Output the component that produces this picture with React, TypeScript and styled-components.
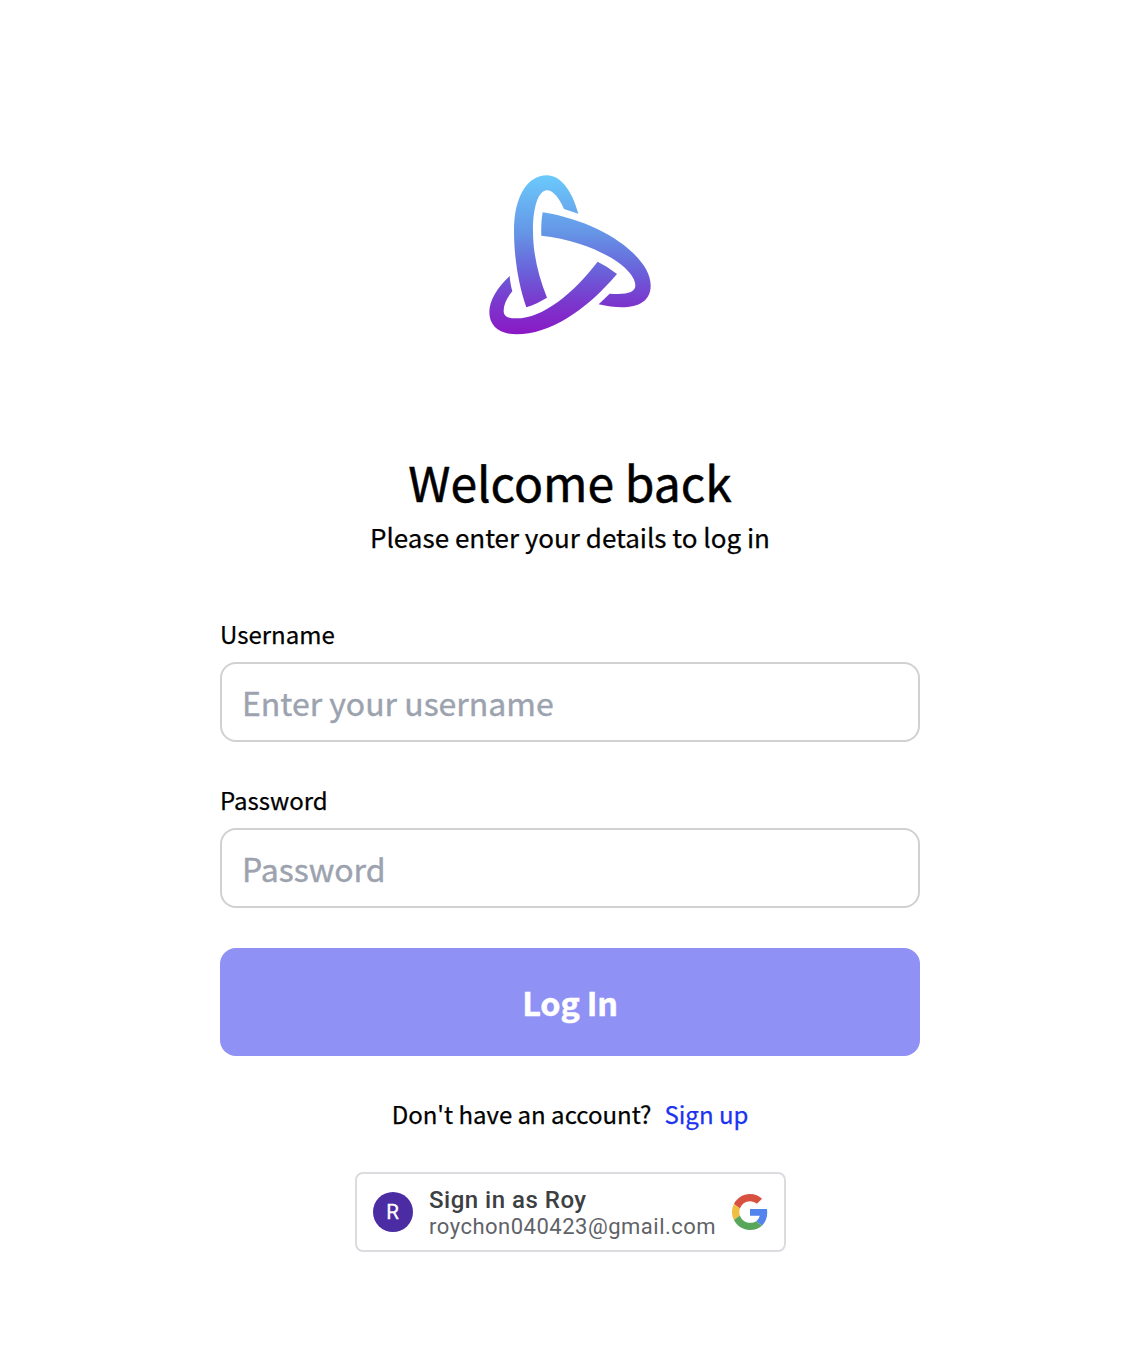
import React from "react";
import styled, { createGlobalStyle } from "styled-components";

const GlobalStyle = createGlobalStyle`
  *, *::before, *::after { box-sizing: border-box; }
  body {
    margin: 0;
    background: #fff;
    color: #000;
    font-family: "Noto Sans CJK KR", "Noto Sans", sans-serif;
  }
`;

const Page = styled.main`
  display: flex;
  flex-direction: column;
  align-items: center;
  min-height: 1366px;
  padding: 165px 0 0 2px;
`;

const Logo = styled.svg`
  display: block;
  width: 180px;
  height: 180px;
`;

const Header = styled.header`
  display: flex;
  flex-direction: column;
  align-items: center;
  gap: 7px;
  margin-top: 106px;
`;

const Title = styled.h1`
  margin: 0;
  font-size: 48px;
  font-weight: 400;
  line-height: 60px;
  -webkit-text-stroke: 0.5px currentColor;
`;

const Subtitle = styled.p`
  margin: 0;
  font-size: 26px;
  line-height: 38px;
  -webkit-text-stroke: 0.25px currentColor;
`;

const Form = styled.form`
  display: flex;
  flex-direction: column;
  gap: 40px;
  width: 700px;
  margin-top: 60px;
`;

const Field = styled.div`
  display: flex;
  flex-direction: column;
  gap: 10px;
`;

const Label = styled.label`
  font-size: 24px;
  line-height: 36px;
  -webkit-text-stroke: 0.25px currentColor;
`;

const Input = styled.input`
  width: 100%;
  height: 80px;
  padding: 0 20px;
  border: 2px solid #d1d1d3;
  border-radius: 16px;
  background: #fff;
  font-family: inherit;
  font-size: 32px;
  outline: none;

  &::placeholder {
    color: #9ca3af;
    opacity: 1;
    -webkit-text-stroke: 0.4px #9ca3af;
  }
`;

const SubmitButton = styled.button`
  height: 108px;
  padding: 0 0 2px;
  border: 0;
  border-radius: 16px;
  background: #8f91f4;
  color: #fff;
  font-family: inherit;
  font-size: 32.4px;
  font-weight: 700;
  letter-spacing: -0.2px;
  -webkit-text-stroke: 0.5px currentColor;
`;

const SignUpRow = styled.p`
  display: flex;
  gap: 13px;
  margin: 40px 0 0;
  font-size: 24px;
  line-height: 36px;
  -webkit-text-stroke: 0.25px currentColor;
`;

const SignUpLink = styled.a`
  color: #1a33f0;
  text-decoration: none;
`;

const GoogleButton = styled.button`
  display: flex;
  align-items: center;
  gap: 16px;
  width: 431px;
  height: 80px;
  margin: 40px 0 0 1px;
  padding: 0 16px;
  border: 2px solid #dadce0;
  border-radius: 8px;
  background: #fff;
  font-family: Roboto, sans-serif;
  text-align: left;
`;

const Avatar = styled.span`
  display: grid;
  place-items: center;
  flex: none;
  width: 40px;
  height: 40px;
  padding-right: 1px;
  border-radius: 50%;
  background: #4b2ca3;
  color: #fff;
  font-size: 20.5px;
  line-height: 40px;
  -webkit-text-stroke: 0.3px currentColor;
`;

const Account = styled.span`
  display: flex;
  flex: 1;
  flex-direction: column;
  min-width: 0;
  padding-top: 4px;
  white-space: nowrap;
`;

const AccountName = styled.span`
  color: #3c4043;
  font-size: 24px;
  font-weight: 500;
  letter-spacing: 0.5px;
  line-height: 26px;
`;

const AccountEmail = styled.span`
  color: #5f6368;
  font-size: 22px;
  letter-spacing: 0.5px;
  line-height: 28px;
`;

const GoogleMark = styled.svg`
  flex: none;
  width: 36px;
  height: 36px;
`;

const fields = [
  { id: "username", label: "Username", type: "text", placeholder: "Enter your username" },
  { id: "password", label: "Password", type: "password", placeholder: "Password" },
];

export default function App() {
  return (
    <>
      <GlobalStyle />
      <Page>
        <Logo viewBox="0 0 540 540" aria-hidden="true">
          <defs>
            <linearGradient id="brand" gradientUnits="userSpaceOnUse" x1="0" y1="30" x2="0" y2="508">
              <stop offset="0" stopColor="#6bcafc" />
              <stop offset="0.36" stopColor="#6596e6" />
              <stop offset="0.6" stopColor="#6a62da" />
              <stop offset="0.8" stopColor="#7a38cd" />
              <stop offset="1" stopColor="#8b18c5" />
            </linearGradient>
          </defs>
          <g fill="url(#brand)">
            <path d="M295 146C275 73 240 31 201 31C141 31 102 97 102 197C102 272 114 355 139 427C161 420 181 410 201 398C173 329 159 262 159 197C159 124 176 76 201 76C219 76 237 98 252 132Z" />
            <path d="M188 142C367 170 512 275 512 362C512 423 447 439 356 418L389 386C437 390 466 384 466 361C466 309 345 230 184 212C183 188 184 165 188 142Z" />
            <path d="M89 333C90 349 93 364 97 379C80 399 71 420 71 437C71 454 84 460 109 460C189 460 280 385 353 290Q384 305 411 327C318 437 208 508 110 508C57 508 28 482 28 441C28 408 51 368 89 333Z" />
          </g>
        </Logo>

        <Header>
          <Title>Welcome back</Title>
          <Subtitle>Please enter your details to log in</Subtitle>
        </Header>

        <Form onSubmit={(event) => event.preventDefault()}>
          {fields.map((field) => (
            <Field key={field.id}>
              <Label htmlFor={field.id}>{field.label}</Label>
              <Input id={field.id} type={field.type} placeholder={field.placeholder} />
            </Field>
          ))}
          <SubmitButton type="submit">Log In</SubmitButton>
        </Form>

        <SignUpRow>
          <span>Don't have an account?</span>
          <SignUpLink href="#">Sign up</SignUpLink>
        </SignUpRow>

        <GoogleButton type="button">
          <Avatar>R</Avatar>
          <Account>
            <AccountName>Sign in as Roy</AccountName>
            <AccountEmail>roychon040423@gmail.com</AccountEmail>
          </Account>
          <GoogleMark viewBox="0 0 48 48" aria-hidden="true">
            <path fill="#d85140" d="M24 9.5c3.54 0 6.71 1.22 9.21 3.6l6.85-6.85C35.9 2.38 30.47 0 24 0 14.62 0 6.51 5.38 2.56 13.22l7.98 6.19C12.43 13.72 17.74 9.5 24 9.5z" />
            <path fill="#5383ec" d="M46.98 24.55c0-1.57-.15-3.09-.38-4.55H24v9.02h12.94c-.58 2.96-2.26 5.48-4.78 7.18l7.73 6c4.51-4.18 7.09-10.36 7.09-17.65z" />
            <path fill="#f1be42" d="M10.53 28.59c-.48-1.45-.76-2.99-.76-4.59s.27-3.14.76-4.59l-7.98-6.19C.92 16.46 0 20.12 0 24c0 3.88.92 7.54 2.56 10.78l7.97-6.19z" />
            <path fill="#58a65c" d="M24 48c6.48 0 11.93-2.13 15.89-5.81l-7.73-6c-2.15 1.45-4.92 2.3-8.16 2.3-6.26 0-11.57-4.22-13.47-9.91l-7.98 6.19C6.51 42.62 14.62 48 24 48z" />
          </GoogleMark>
        </GoogleButton>
      </Page>
    </>
  );
}
